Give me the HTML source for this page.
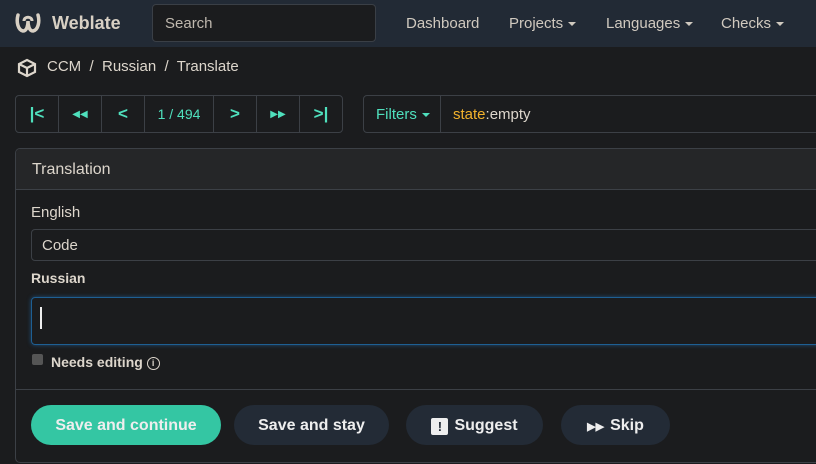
<!DOCTYPE html>
<html><head><style>
*{box-sizing:border-box;margin:0;padding:0}
body{width:816px;height:464px;overflow:hidden;background:#1b1c1e;font-family:"Liberation Sans",sans-serif;color:#ddd6cc;font-size:15px;position:relative}
.nav{position:absolute;left:0;top:0;width:816px;height:47px;background:#222a35}
.abs{position:absolute}
.search{left:152px;top:4px;width:224px;height:38px;border:1px solid #3a3f46;border-radius:4px;background:#1b1c1e;padding:10px 12px;color:#bfb8ae}
.navi{top:15px;color:#d0c9bf;font-size:15px}
.caret{display:inline-block;border-left:4px solid transparent;border-right:4px solid transparent;border-top:4px solid #d0c9bf;vertical-align:middle;margin-left:5px}
.pager{left:15px;top:95px;height:38px;width:328px;border:1px solid #3c4046;border-radius:4px;display:flex}
.pager div{border-right:1px solid #3c4046;display:flex;align-items:center;justify-content:center;color:#4fe0bd;font-size:14px}
.pager div:last-child{border-right:none}
.panel{left:15px;top:148px;width:820px;height:315px;border:1px solid #3c4046;border-radius:5px;overflow:hidden}
.btn{top:405px;height:40px;border-radius:20px;background:#232b36;color:#eee;font-weight:bold;font-size:16px;display:flex;align-items:center;justify-content:center;padding-top:2px}
</style></head><body>
<div class="nav"></div>
<svg class="abs" style="left:15px;top:12px" width="26" height="22" viewBox="0 0 26 22"><path d="M3 3 C1 10 3 18 8 19 C12 19 13 13 13 9 C13 13 14 19 18 19 C23 18 25 10 23 3" fill="none" stroke="#d8d0c4" stroke-width="3.5" stroke-linecap="round"/><path d="M9 9 C9 4 17 4 17 9" fill="none" stroke="#d8d0c4" stroke-width="3"/></svg>
<div class="abs" style="left:52px;top:13px;font-weight:bold;font-size:18px;color:#d8d0c4">Weblate</div>
<div class="abs search">Search</div>
<div class="abs navi" style="left:406px">Dashboard</div>
<div class="abs navi" style="left:509px">Projects<span class="caret"></span></div>
<div class="abs navi" style="left:606px">Languages<span class="caret"></span></div>
<div class="abs navi" style="left:721px">Checks<span class="caret"></span></div>
<svg class="abs" style="left:17px;top:58px" width="20" height="20" viewBox="0 0 20 20"><path d="M10 2 L18 6 L18 14 L10 18 L2 14 L2 6 Z M2 6 L10 10 L18 6 M10 10 L10 18" fill="none" stroke="#ddd6cc" stroke-width="2.2"/></svg>
<div class="abs" style="left:47px;top:58px;color:#ddd6cc">CCM &nbsp;/&nbsp; Russian &nbsp;/&nbsp; Translate</div>
<div class="abs pager">
<div style="width:43px;font-weight:bold;font-size:17px">|&lt;</div>
<div style="width:43px;font-size:10px">◀◀</div>
<div style="width:43px;font-weight:bold;font-size:17px">&lt;</div>
<div style="width:69px">1 / 494</div>
<div style="width:43px;font-weight:bold;font-size:17px">&gt;</div>
<div style="width:43px;font-size:10px">▶▶</div>
<div style="width:42px;font-weight:bold;font-size:17px">&gt;|</div>
</div>
<div class="abs" style="left:363px;top:95px;width:470px;height:38px;border:1px solid #3c4046;border-radius:4px"></div>
<div class="abs" style="left:440px;top:95px;width:1px;height:38px;background:#3c4046"></div>
<div class="abs" style="left:376px;top:106px;color:#4fe0bd;font-size:15px">Filters<span class="caret" style="border-top-color:#4fe0bd"></span></div>
<div class="abs" style="left:453px;top:106px;color:#ddd6cc"><span style="color:#f2b22c">state</span>:empty</div>
<div class="abs panel">
<div style="height:41px;background:#252628;border-bottom:1px solid #3c4046;padding:12px 16px;font-size:16px;color:#ddd6cc">Translation</div>
</div>
<div class="abs" style="left:31px;top:204px">English</div>
<div class="abs" style="left:31px;top:229px;width:800px;height:32px;border:1px solid #3c4046;border-radius:4px;padding:7px 10px">Code</div>
<div class="abs" style="left:31px;top:270px;font-weight:bold;font-size:14px">Russian</div>
<div class="abs" style="left:31px;top:297px;width:800px;height:48px;border:1px solid #1e5f93;border-radius:4px;box-shadow:0 0 4px #1e4f7a"></div>
<div class="abs" style="left:40px;top:307px;width:2px;height:22px;background:#eee"></div>
<div class="abs" style="left:32px;top:354px;width:11px;height:11px;background:#555;border-radius:2px"></div>
<div class="abs" style="left:51px;top:354px;font-weight:bold;font-size:14px">Needs editing <span style="display:inline-block;width:13px;height:13px;border:1.5px solid #ddd6cc;border-radius:50%;font-size:9px;text-align:center;line-height:10px;vertical-align:middle">i</span></div>
<div class="abs" style="left:16px;top:389px;width:800px;height:1px;background:#3c4046"></div>
<div class="abs btn" style="left:31px;width:190px;background:#34c6a3">Save and continue</div>
<div class="abs btn" style="left:234px;width:155px">Save and stay</div>
<div class="abs btn" style="left:406px;width:137px"><span style="display:inline-block;width:17px;height:17px;background:#eee;color:#232b36;border-radius:2px;font-size:13px;text-align:center;line-height:17px;margin-right:6px">!</span>Suggest</div>
<div class="abs btn" style="left:561px;width:109px"><span style="font-size:11px;margin-right:6px">▶▶</span>Skip</div>
</body></html>
